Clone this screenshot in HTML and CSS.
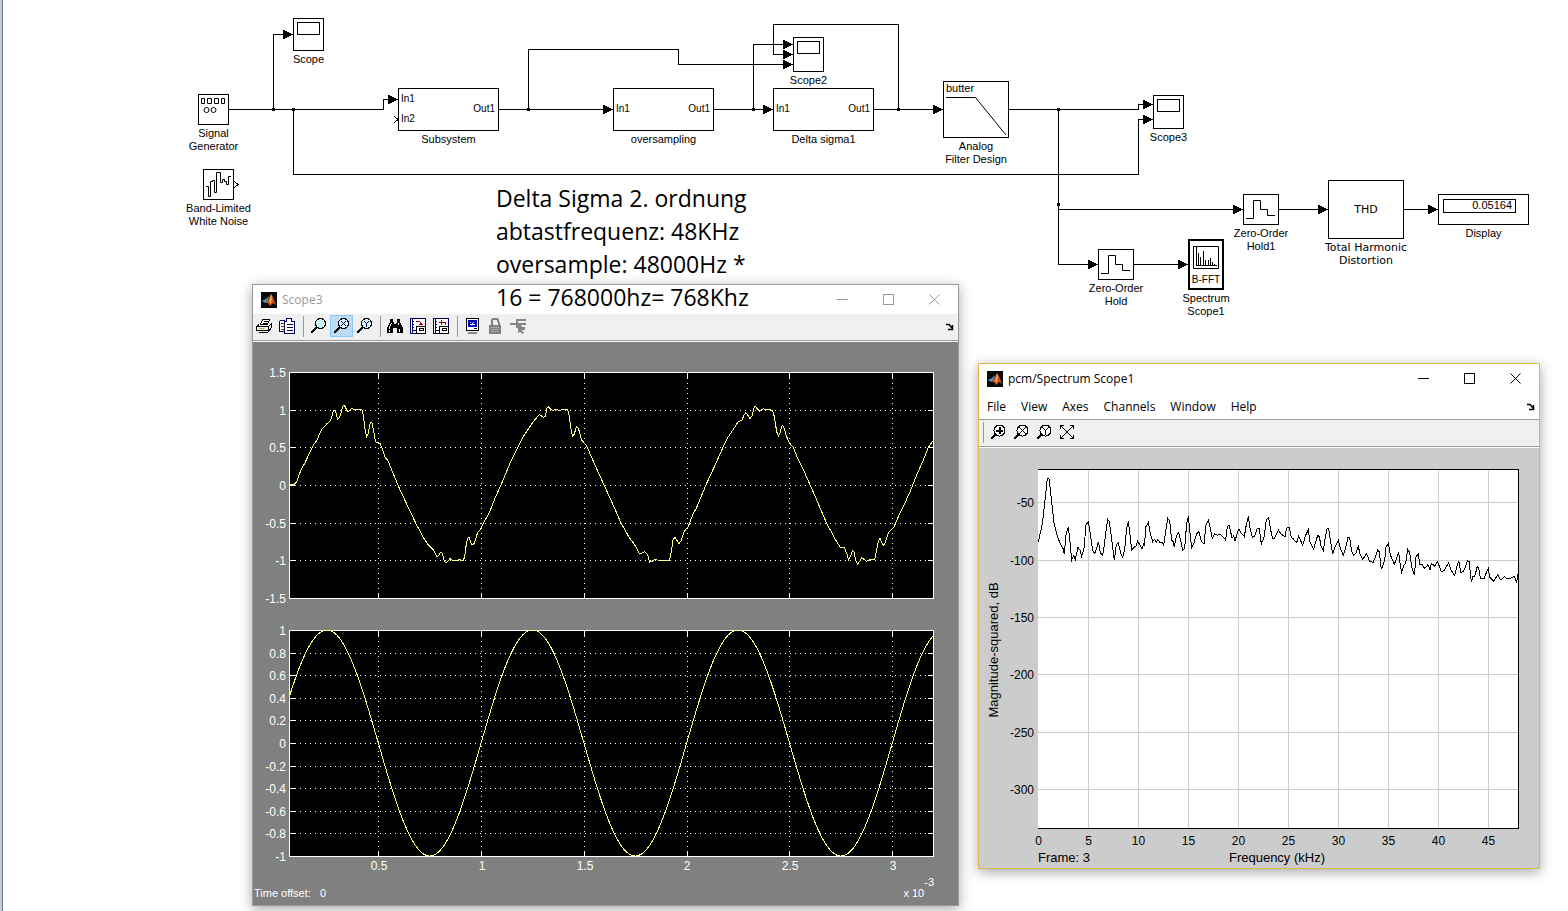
FILE: index.html
```html
<!DOCTYPE html>
<html lang="de">
  <head>
    <meta charset="utf-8" />
    <title>pcm</title>

    <link rel="stylesheet" href="styles.css">
  </head>

  <body>
    <svg class="defs" aria-hidden="true">
      <symbol id="logo" viewBox="0 0 16 16">
        <rect width="16" height="16" fill="#0a0a0c"/>
        <path d="M1 9L5 7L8 4L7 8L4 11Z" fill="#4a9cc4"/>
        <path d="M4 11L7 8L10 2L12 5L15 13L12 11L9 14L7 11Z" fill="#c8501c"/>
        <path d="M10 2L11 6L10 12L8 10Z" fill="#f4a63c"/>
      </symbol>
      <symbol id="dock" viewBox="0 0 8 8">
        <path d="M0 1.500H3L6 5M6.500 2V6.500H2" fill="none" stroke="#000" stroke-width="1.500"/>
      </symbol>
      <symbol id="minimize" viewBox="0 0 11 11"><path d="M0 5.500H11" stroke="currentColor"/></symbol>
      <symbol id="maximize" viewBox="0 0 11 11"><rect x="0.500" y="0.500" width="10" height="10" fill="none" stroke="currentColor"/></symbol>
      <symbol id="close" viewBox="0 0 11 11"><path d="M0.500 0.500L10.500 10.500M10.500 0.500L0.500 10.500" stroke="currentColor"/></symbol>
    </svg>

    <main class="model">
      <!-- signal lines -->
      <svg class="wires" aria-hidden="true">
        <defs>
          <marker id="arrow" markerWidth="10" markerHeight="10" refX="10" refY="5" markerUnits="userSpaceOnUse">
            <path d="M0 0L10 5L0 10Z"/>
          </marker>
        </defs>
        <g class="lines">
          <path d="M229 109.500H383.500V99.500H398"/>
          <path d="M273.500 109.500V34.500H293"/>
          <path d="M293.500 109.500V174.500H1138.500V119.500H1153"/>
          <path d="M499 109.500H613"/>
          <path d="M528.500 109.500V49.500H678.500V64.500H793"/>
          <path d="M714 109.500H773"/>
          <path d="M753.500 109.500V44.500H793"/>
          <path d="M874 109.500H943"/>
          <path d="M898.500 109.500V24.500H773.500V54.500H793"/>
          <path d="M1009 109.500H1138.500V104.500H1153"/>
          <path d="M1058.500 109.500V264.500H1098"/>
          <path d="M1058.500 209.500H1243"/>
          <path d="M1134 264.500H1188"/>
          <path d="M1279 209.500H1328"/>
          <path d="M1404 209.500H1438"/>
        </g>
        <path d="M272 108h3v3h-3zM292 108h3v3h-3zM527 108h3v3h-3zM752 108h3v3h-3zM897 108h3v3h-3zM1057 108h3v3h-3zM1057 203h3v3h-3z"/>
        <path class="port" d="M394 116L398 119.500L394 123M234 181L238 184.500L234 188"/>
      </svg>

      <!-- blocks -->
      <div class="block generator">
        <div class="box">
          <svg width="29" height="29" viewBox="0 0 29 29">
            <path d="M2.500 3.500h3v5h-3zM8.500 3.500h4v5h-4zM15.500 3.500h4v5h-4zM22.500 3.500h3v5h-3z"/>
            <circle cx="7.500" cy="15" r="2.500"/><circle cx="14.500" cy="15" r="2.500"/>
          </svg>
        </div>
        <span>Signal<br>Generator</span>
      </div>
      <div class="block scope">
        <div class="box"><i class="screen"></i></div>
        <span>Scope</span>
      </div>
      <div class="block noise">
        <div class="box">
          <svg width="29" height="29" viewBox="0 0 29 29">
            <path d="M2 16.500H4.500V26.500H6.500V11.500H8.500V10.500H10.500V22.500H12.500V2.500H16.500V12.500H18.500V9.500H20.500V11.500H22.500V14.500H24.500V6.500H27"/>
          </svg>
        </div>
        <span>Band-Limited<br>White Noise</span>
      </div>
      <div class="block subsystem">
        <div class="box ports"><b>In1<br><br>In2</b><b>Out1</b></div>
        <span>Subsystem</span>
      </div>
      <div class="block oversampling">
        <div class="box ports"><b>In1</b><b>Out1</b></div>
        <span>oversampling</span>
      </div>
      <div class="block delta">
        <div class="box ports"><b>In1</b><b>Out1</b></div>
        <span>Delta sigma1</span>
      </div>
      <div class="block scope2">
        <div class="box"><i class="screen"></i></div>
        <span>Scope2</span>
      </div>
      <div class="block filter">
        <div class="box">
          <em>butter</em>
          <svg width="64" height="40" viewBox="0 0 64 40"><path d="M2 0.500H31.500L62 38"/></svg>
        </div>
        <span>Analog<br>Filter Design</span>
      </div>
      <div class="block scope3">
        <div class="box"><i class="screen"></i></div>
        <span>Scope3</span>
      </div>
      <div class="block hold">
        <div class="box">
          <svg width="34" height="29" viewBox="0 0 34 29"><path d="M2 23.500H9.500V5.500H16.500V14.500H23.500V20.500H31"/></svg>
        </div>
        <span>Zero-Order<br>Hold</span>
      </div>
      <div class="block hold1">
        <div class="box">
          <svg width="34" height="29" viewBox="0 0 34 29"><path d="M2 23.500H9.500V5.500H16.500V14.500H23.500V20.500H31"/></svg>
        </div>
        <span>Zero-Order<br>Hold1</span>
      </div>
      <div class="block spectrum">
        <div class="box">
          <svg width="32" height="30" viewBox="0 0 32 30">
            <path d="M3.500 5.500h25v22h-25zM6.500 25V6M8.500 25V12M10.500 25V16M13.500 25V10M15.500 25V19M18.500 25V19M20.500 25V17M22.500 25V21M24.500 25V23M6 24.500H27"/>
          </svg>
          <em>B-FFT</em>
        </div>
        <span>Spectrum<br>Scope1</span>
      </div>
      <div class="block thd">
        <div class="box"><em>THD</em></div>
        <span>Total Harmonic<br>Distortion</span>
      </div>
      <div class="block display">
        <div class="box"><output>0.05164</output></div>
        <span>Display</span>
      </div>

      <p class="note">Delta Sigma 2. ordnung<br>abtastfrequenz: 48KHz<br>oversample: 48000Hz *<br>16 = 768000hz= 768Khz</p>

      <!-- Scope3 window -->
      <section class="window scope-window">
        <header class="titlebar">
          <svg class="logo"><use href="#logo"/></svg>
          <h2>Scope3</h2>
          <button type="button" aria-label="Minimize"><svg><use href="#minimize"/></svg></button>
          <button type="button" aria-label="Maximize"><svg><use href="#maximize"/></svg></button>
          <button type="button" aria-label="Close"><svg><use href="#close"/></svg></button>
        </header>
        <div class="toolbar">
          <button type="button" aria-label="Print">
            <svg viewBox="0 0 16 16"><path d="M1 8L4 6H14L12 9Z" fill="#fff"/><path d="M4.500 6.500L6.500 1.500H13.500L11.500 6.500Z" fill="#fff" stroke="#000"/><path d="M0.500 8.500L3 6.500M0.500 8.500H12.500L15.500 5.500V9.500L12.500 12.500H0.500ZM12.500 8.500V12.500M8 3.500H12M7 5.500H11M2.500 14.500H11.500L14.500 11.500" fill="none" stroke="#000"/><path d="M3 10.500H8" stroke="#c8b000"/></svg>
          </button>
          <button type="button" aria-label="Parameters">
            <svg viewBox="0 0 16 16"><path d="M0.500 2.500H5.500V15M0.500 2.500V13.500H6M5.500 3.500H7.500V0.500H12.500V3.500H15.500V15.500H5.500Z" fill="#fff" stroke="#000060"/><path d="M8 6.500H14M8 9.500H14M8 12.500H14" stroke="#000060"/><path d="M2 5.500H5M2 8.500H5M2 11.500H5" stroke="#a02020"/></svg>
          </button>
          <hr>
          <button type="button" aria-label="Zoom">
            <svg viewBox="0 0 16 16"><circle cx="10.500" cy="5.500" r="5" fill="#c8f4f4" stroke="#000"/><path d="M7 9L1 15" stroke="#000" stroke-width="2"/></svg>
          </button>
          <button type="button" class="active" aria-label="Zoom X-axis">
            <svg viewBox="0 0 16 16"><circle cx="10.500" cy="5.500" r="5" fill="#d8f0fa" stroke="#000"/><path d="M8 3L13 8M13 3L8 8" stroke="#000060"/><path d="M7 9L1 15" stroke="#000" stroke-width="2"/></svg>
          </button>
          <button type="button" aria-label="Zoom Y-axis">
            <svg viewBox="0 0 16 16"><circle cx="10.500" cy="5.500" r="5" fill="#d8f8f8" stroke="#000"/><path d="M8 3L10.500 5.500L13 3M10.500 5.500V9" fill="none" stroke="#000060"/><path d="M7 9L1 15" stroke="#000" stroke-width="2"/></svg>
          </button>
          <hr>
          <button type="button" aria-label="Autoscale">
            <svg viewBox="0 0 16 16"><path d="M3 1H6V4L7 5V6H9V5L10 4V1H13V4L16 10V15H10V10H6V15H0V10L3 4Z"/><path d="M4.500 5L2 10.500M11.500 5V7M2 12V14M12 11V14" stroke="#fff"/></svg>
          </button>
          <button type="button" aria-label="Save axes settings">
            <svg viewBox="0 0 16 16"><path d="M0.500 0.500H15.500V15.500H0.500Z" fill="#fff" stroke="#000060"/><path d="M2.500 1V15M2 3.500H4M2 6.500H4M2 9.500H4M2 12.500H15" stroke="#000060"/><path d="M6 3.500H9.500L11.500 6M9 6.500H13" fill="none" stroke="#a00000"/><path d="M6.500 8.500H15.500V15.500H6.500Z" fill="#fff" stroke="#000"/><path d="M9 10.500H13V12.500H9Z" fill="#fff" stroke="#000"/></svg>
          </button>
          <button type="button" aria-label="Restore axes settings">
            <svg viewBox="0 0 16 16"><path d="M0.500 0.500H15.500V15.500H0.500Z" fill="#fff" stroke="#000060"/><path d="M2.500 1V15M2 3.500H4M2 6.500H4M2 9.500H4M2 12.500H15" stroke="#000060"/><path d="M12.500 7V4.500H6M8.500 2V7" fill="none" stroke="#a00000"/><path d="M6.500 8.500H15.500V15.500H6.500Z" fill="#fff" stroke="#000"/><path d="M9 10.500H13V12.500H9Z" fill="#fff" stroke="#000"/></svg>
          </button>
          <hr>
          <button type="button" aria-label="Floating scope">
            <svg viewBox="0 0 16 16"><path d="M2.500 0.500H14.500V12.500H2.500Z" fill="#fff" stroke="#000"/><path d="M5 3H12V8H5Z" fill="#fff" stroke="#0000c0" stroke-width="2"/><path d="M6.500 6L8.500 4L10 6L11 4" fill="none" stroke="#0000c0"/><path d="M4 14.500H13" stroke="#888" stroke-width="2"/><path d="M10 10.500H13" stroke="#000"/></svg>
          </button>
          <button type="button" aria-label="Lock axes">
            <svg viewBox="0 0 16 16"><path d="M4.500 8V4A3.500 3.500 0 0 1 11.500 4V8" fill="none" stroke="#808080" stroke-width="2"/><path d="M2 7H14V16H2Z" fill="#808080"/><path d="M4 9.500H12M4 11.500H12M4 13.500H12" stroke="#a8a8a8"/></svg>
          </button>
          <button type="button" aria-label="Signal selection">
            <svg viewBox="0 0 16 16"><path d="M0 6H7M6 2H16M6 6H16M8 9.500H15M7 1V10" fill="none" stroke="#858585" stroke-width="2"/><path d="M8 5L15 12L12 12L14 15L12 16L10 13L8 15Z" fill="#858585"/></svg>
          </button>
          <svg class="dock"><use href="#dock"/></svg>
        </div>
        <svg class="plot" id="scopePlot" viewBox="253 342 705 538" role="img" aria-label="Scope3 signals">
          <g class="axes"></g>
          <!-- filtered delta sigma output, in thirds of a pixel -->
          <g transform="translate(250 360) scale(0.333333)">
            <polyline class="trace" points="120,374 132,374 140,366 152,332 165,308 190,255 200,242 215,208 232,190 242,182 250,152 256,152 263,178 269,172 279,137 284,137 291,152 295,155 305,146 318,150 325,148 336,150 340,166 346,215 350,230 354,222 361,188 366,188 371,215 377,246 390,250 398,270 405,292 413,300 445,378 470,432 500,495 520,532 535,555 550,570 561,590 567,586 571,577 577,580 583,605 588,609 594,604 600,596 610,603 620,602 628,599 640,601 644,590 650,545 654,534 658,533 663,548 667,555 673,550 683,517 692,508 700,490 718,458 735,415 755,370 780,310 803,262 820,230 850,185 868,163 874,168 880,172 886,170 891,145 895,140 902,148 907,151 918,149 928,151 940,149 953,149 958,170 964,215 968,229 973,222 979,200 985,204 995,240 1010,258 1035,315 1060,370 1090,436 1112,487 1135,528 1155,556 1168,580 1177,579 1185,575 1193,585 1199,606 1205,605 1215,598 1222,600 1259,601 1263,580 1269,540 1275,532 1280,540 1287,552 1293,542 1303,514 1315,499 1330,460 1338,447 1370,370 1400,305 1423,253 1432,235 1450,208 1465,184 1475,182 1482,166 1487,158 1493,165 1500,176 1506,168 1513,140 1517,140 1523,148 1529,154 1540,146 1550,150 1560,148 1568,152 1573,170 1580,215 1585,228 1589,222 1596,197 1601,199 1608,225 1616,245 1630,263 1645,300 1665,340 1695,408 1730,490 1760,545 1772,563 1784,564 1790,580 1796,599 1801,590 1807,572 1812,575 1817,600 1823,612 1829,604 1835,594 1842,598 1850,604 1863,598 1874,600 1878,580 1885,543 1890,535 1895,548 1900,556 1906,548 1915,518 1932,501 1945,470 1960,440 1980,395 2000,345 2020,300 2035,262 2051,240"/>
          </g>
          <polyline class="trace" id="sine"/>
        </svg>
        <footer class="status">
          <span>Time offset:&nbsp;&nbsp; 0</span>
          <span>x 10<sup>-3</sup></span>
        </footer>
      </section>

      <!-- Spectrum Scope1 window -->
      <section class="window spectrum-window">
        <header class="titlebar">
          <svg class="logo"><use href="#logo"/></svg>
          <h2>pcm/Spectrum Scope1</h2>
          <button type="button" aria-label="Minimize"><svg><use href="#minimize"/></svg></button>
          <button type="button" aria-label="Maximize"><svg><use href="#maximize"/></svg></button>
          <button type="button" aria-label="Close"><svg><use href="#close"/></svg></button>
        </header>
        <nav class="menu">
          <button type="button">File</button>
          <button type="button">View</button>
          <button type="button">Axes</button>
          <button type="button">Channels</button>
          <button type="button">Window</button>
          <button type="button">Help</button>
          <svg class="dock"><use href="#dock"/></svg>
        </nav>
        <div class="toolbar">
          <hr>
          <button type="button" aria-label="Zoom in">
            <svg viewBox="0 0 16 16"><circle cx="9.500" cy="6.500" r="5.500" fill="#fff" stroke="#000"/><path d="M6 6.500H13M9.500 3V10" stroke="#000" stroke-width="2"/><path d="M6 10L1 15" stroke="#000" stroke-width="2"/></svg>
          </button>
          <button type="button" aria-label="Zoom X">
            <svg viewBox="0 0 16 16"><circle cx="9.500" cy="6.500" r="5.500" fill="#fff" stroke="#000"/><path d="M6 3L13 10M13 3L6 10" stroke="#000"/><path d="M6 10L1 15" stroke="#000" stroke-width="2"/></svg>
          </button>
          <button type="button" aria-label="Zoom Y">
            <svg viewBox="0 0 16 16"><circle cx="9.500" cy="6.500" r="5.500" fill="#fff" stroke="#000"/><path d="M6.500 3.500L9.500 6.500L12.500 3.500M9.500 6.500V11" fill="none" stroke="#000"/><path d="M6 10L1 15" stroke="#000" stroke-width="2"/></svg>
          </button>
          <button type="button" aria-label="Full view">
            <svg viewBox="0 0 16 16"><path d="M2 2L14 14M14 2L2 14M1.500 5V1.500H5M11 1.500H14.500V5M14.500 11V14.500H11M5 14.500H1.500V11" fill="none" stroke="#000"/></svg>
          </button>
        </div>
        <svg class="plot" id="spectrumPlot" viewBox="979 448 560 420" role="img" aria-label="Magnitude spectrum">
          <rect x="1038" y="469" width="481" height="360" fill="#fff"/>
          <g class="axes"></g>
          <path class="frame" d="M1038 469.500H1518.500V828.500H1038"/>
          <g transform="translate(1030 460) scale(0.333333)">
            <polyline class="trace" points="25,247 38,185 45,120 52,55 57,57 64,115 72,190 82,230 95,260 99,265 103,282 108,225 115,200 119,235 125,300 131,287 136,298 144,262 150,270 155,290 162,265 168,195 175,185 182,230 188,272 194,280 200,265 205,245 211,278 217,286 221,270 227,220 233,178 238,185 244,230 253,300 259,254 265,248 272,280 278,292 284,270 290,205 295,184 300,225 305,270 312,262 318,258 323,244 330,255 336,266 341,252 343,258 348,200 355,187 361,220 368,245 373,238 379,246 384,239 390,248 395,246 401,256 407,215 413,175 419,182 425,240 430,245 433,262 439,228 446,218 452,240 458,270 464,266 470,190 475,169 480,220 485,262 492,248 500,222 507,215 514,245 522,252 528,195 535,181 541,205 547,236 554,222 562,226 567,222 577,228 587,240 592,200 598,196 606,235 611,228 615,244 620,225 627,206 634,220 643,230 648,200 655,169 660,205 667,232 674,228 682,205 688,205 694,252 702,232 709,178 716,173 722,210 728,236 734,234 745,210 753,222 765,230 770,204 778,202 784,232 790,237 800,248 806,228 818,256 826,228 835,209 840,245 851,267 863,226 868,230 873,258 880,272 886,230 892,204 896,206 901,240 908,282 916,258 925,240 930,262 940,286 946,268 954,232 959,234 965,275 971,286 978,280 985,260 991,285 998,298 1010,281 1018,303 1030,307 1036,290 1043,271 1048,276 1054,328 1064,300 1068,262 1075,250 1081,285 1093,313 1100,295 1106,275 1110,310 1115,336 1122,315 1127,310 1133,268 1139,277 1145,320 1153,346 1158,290 1165,283 1170,315 1176,313 1184,326 1194,314 1200,330 1204,310 1214,318 1223,305 1234,336 1242,332 1256,308 1263,330 1274,346 1280,322 1286,302 1293,338 1300,334 1307,320 1312,302 1317,304 1324,366 1329,348 1334,350 1342,319 1346,322 1351,355 1363,355 1370,335 1375,326 1379,352 1391,364 1403,344 1410,358 1417,357 1423,350 1432,357 1442,355 1453,349 1460,368 1463,342 1466,352"/>
          </g>
          <text x="1038" y="862">Frame: 3</text>
          <text x="1277" y="862" text-anchor="middle">Frequency (kHz)</text>
          <text transform="translate(998 650) rotate(-90)" text-anchor="middle">Magnitude-squared, dB</text>
        </svg>
      </section>
    </main>

    <script src="plots.js"></script>
  </body>
</html>
```
FILE: styles.css
```css
* {
  box-sizing: border-box;
}

body {
  margin: 0;
  background: #fff;
  color: #000;
  font-family: "Liberation Sans", Arial, sans-serif;
}

.defs {
  display: none;
}

.model {
  position: relative;
  min-height: 100vh;
  overflow: hidden;
  background: linear-gradient(to right, #c3ccd6 2px, #6f767e 2px, #6f767e 3px, #fff 3px);
}

.wires {
  position: absolute;
  left: 0;
  top: 0;
  width: 100%;
  height: 100%;
  shape-rendering: crispEdges;
}

.wires .lines path {
  fill: none;
  stroke: #000;
  marker-end: url(#arrow);
}

.wires .port {
  fill: none;
  stroke: #000;
}

/* blocks */
.block {
  position: absolute;
  display: flex;
  flex-direction: column;
  align-items: center;
}

.block span {
  margin-top: 2px;
  font-size: 11px;
  line-height: 13px;
  text-align: center;
  white-space: nowrap;
}

.box {
  width: 100%;
  border: 1px solid #000;
  background: #fff;
  overflow: hidden;
}

.box svg {
  display: block;
  fill: none;
  stroke: #000;
}

.box em {
  display: block;
  font-style: normal;
  font-size: 11px;
  line-height: 13px;
}

.ports {
  display: flex;
  align-items: center;
  justify-content: space-between;
  padding: 0 3px 1px 2px;
  font-size: 10px;
  line-height: 10px;
}

.ports b {
  font-weight: normal;
}

.screen {
  display: block;
  width: 23px;
  height: 13px;
  margin: 3px;
  border: 1px solid #000;
}

.generator { left: 198px; top: 94px; width: 31px; }
.noise { left: 203px; top: 169px; width: 31px; }
.scope { left: 293px; top: 18px; width: 31px; }
.scope2 { left: 793px; top: 37px; width: 31px; }
.scope3 { left: 1153px; top: 95px; width: 31px; }
.subsystem { left: 398px; top: 88px; width: 101px; }
.oversampling { left: 613px; top: 88px; width: 101px; }
.delta { left: 773px; top: 88px; width: 101px; }
.filter { left: 943px; top: 81px; width: 66px; }
.hold { left: 1098px; top: 249px; width: 36px; }
.hold1 { left: 1243px; top: 194px; width: 36px; }
.spectrum { left: 1188px; top: 239px; width: 36px; }
.thd { left: 1328px; top: 180px; width: 76px; }
.display { left: 1438px; top: 194px; width: 91px; }

.scope .box { height: 33px; }
.scope2 .box { height: 35px; }
.scope3 .box { height: 34px; }
.ports { height: 43px; }

.filter .box {
  height: 57px;
}

.filter em {
  padding-left: 2px;
  margin-bottom: 2px;
}

.spectrum .box {
  height: 51px;
  border-width: 2px;
  text-align: center;
}

.spectrum em {
  margin-top: 2px;
  font-size: 10px;
}

.thd .box {
  display: flex;
  align-items: center;
  justify-content: center;
  height: 59px;
}

.thd em,
.thd span {
  font-family: "DejaVu Sans", Verdana, sans-serif;
}

.display .box {
  height: 31px;
  padding: 4px;
}

.display output {
  display: block;
  width: 73px;
  height: 14px;
  padding-right: 3px;
  border: 1px solid #000;
  font-size: 11px;
  line-height: 11px;
  text-align: right;
}

.note {
  position: absolute;
  left: 496px;
  top: 182px;
  z-index: 2;
  margin: 0;
  font-family: "Open Sans", Calibri, sans-serif;
  font-size: 23px;
  line-height: 33px;
}

/* windows */
.window {
  position: absolute;
  display: flex;
  flex-direction: column;
  border: 1px solid #999;
  box-shadow: 0 3px 12px rgba(0, 0, 0, 0.35);
  background: #fff;
}

.scope-window {
  left: 252px;
  top: 284px;
  width: 707px;
}

.spectrum-window {
  left: 978px;
  top: 363px;
  width: 562px;
  border-color: #e3b64a;
}

.titlebar {
  display: flex;
  align-items: center;
  height: 29px;
  padding-left: 8px;
}

.titlebar h2 {
  flex: 1;
  margin: 0 0 0 5px;
  font-family: "Open Sans", "Segoe UI", sans-serif;
  font-size: 12px;
  font-weight: normal;
}

.logo {
  width: 16px;
  height: 16px;
}

button {
  display: flex;
  align-items: center;
  justify-content: center;
  padding: 0;
  border: none;
  background: none;
  color: #000;
}

.titlebar button {
  width: 46px;
  height: 29px;
  padding-right: 1px;
}

.titlebar button svg {
  width: 11px;
  height: 11px;
}

.scope-window .titlebar h2,
.scope-window .titlebar button {
  color: #999;
}

.toolbar {
  display: flex;
  align-items: center;
  height: 27px;
  padding-bottom: 2px;
  border-bottom: 1px solid #999;
  background: #f0f0f0;
}

.toolbar button {
  width: 23px;
  height: 22px;
  padding-right: 1px;
}

.toolbar button svg {
  width: 16px;
  height: 16px;
  shape-rendering: crispEdges;
}

.toolbar .active {
  background: #bcdcf4;
  border: 1px solid #90c8f6;
}

.toolbar hr {
  width: 1px;
  height: 21px;
  margin: 0 3px 0 4px;
  border: none;
  background: #999;
}

.dock {
  width: 8px;
  height: 8px;
  margin: 2px 4px 0 auto;
}

.menu {
  display: flex;
  align-items: center;
  gap: 15px;
  height: 27px;
  padding-left: 8px;
  border-bottom: 1px solid #999;
}

.menu button {
  font-family: "Open Sans", "Segoe UI", sans-serif;
  font-size: 12px;
}

/* plots */
.plot {
  display: block;
  width: 100%;
  border-top: 1px solid #fff;
}

.plot line,
.plot path,
.plot polyline {
  shape-rendering: crispEdges;
}

.plot .trace {
  fill: none;
  vector-effect: non-scaling-stroke;
}

#scopePlot {
  background: #808080;
  font-size: 12px;
  fill: #fff;
}

#scopePlot .trace {
  stroke: #ffff80;
}

#scopePlot .grid {
  stroke: #fff;
  stroke-dasharray: 1 4;
}

#scopePlot .tick,
#scopePlot .frame {
  stroke: #fff;
}

#scopePlot .frame {
  fill: #000;
}

#spectrumPlot {
  background: #ccc;
  font-size: 13px;
}

#spectrumPlot .trace,
#spectrumPlot .frame {
  fill: none;
  stroke: #000;
}

#spectrumPlot .grid {
  stroke: #ccc;
}

#spectrumPlot .tick-label {
  font-size: 12px;
}

.status {
  display: flex;
  justify-content: space-between;
  height: 25px;
  padding: 5px 24px 0 1px;
  background: #808080;
  color: #fff;
  font-size: 11px;
  line-height: 16px;
}

.status sup {
  position: relative;
  top: -11px;
  font-size: 11px;
  line-height: 0;
  vertical-align: baseline;
}
```
FILE: plots.js
```js
const SVG_NS = "http://www.w3.org/2000/svg";

function add(parent, name, attrs, text) {
  const el = document.createElementNS(SVG_NS, name);
  for (const key in attrs) {
    el.setAttribute(key, attrs[key]);
  }
  if (text !== undefined) {
    el.textContent = text;
  }
  parent.appendChild(el);
}

function addLine(parent, cls, x1, y1, x2, y2) {
  add(parent, "line", { class: cls, x1: x1, y1: y1, x2: x2, y2: y2 });
}

function addLabel(parent, x, y, anchor, text) {
  add(parent, "text", { class: "tick-label", x: x, y: y, "text-anchor": anchor }, text);
}

// One black axes box of the scope, with dotted grid and tick marks
function scopeAxes(top, labels) {
  const g = document.querySelector("#scopePlot .axes");
  const left = 289.5, right = 933.5, height = 226;
  add(g, "rect", { class: "frame", x: left, y: top, width: right - left, height: height });

  [378.5, 481.5, 584.5, 687.5, 789.5, 892.5].forEach(x => {
    addLine(g, "grid", x, top, x, top + height);
    addLine(g, "tick", x, top, x, top + 6);
    addLine(g, "tick", x, top + height - 6, x, top + height);
  });

  labels.forEach((label, i) => {
    const y = Math.floor(top + height * i / (labels.length - 1)) + 0.5;
    addLine(g, "grid", left, y, right, y);
    addLine(g, "tick", left, y, left + 6, y);
    addLine(g, "tick", right - 6, y, right, y);
    addLabel(g, 286, y + 4, "end", label);
  });
}

scopeAxes(372.5, ["1.5", "1", "0.5", "0", "-0.5", "-1", "-1.5"]);
scopeAxes(630.5, ["1", "0.8", "0.6", "0.4", "0.2", "0", "-0.2", "-0.4", "-0.6", "-0.8", "-1"]);

const scope = document.querySelector("#scopePlot .axes");
["0.5", "1", "1.5", "2", "2.5", "3"].forEach((label, i) => {
  addLabel(scope, 379 + Math.round(i * 102.8), 870, "middle", label);
});

// 1 kHz reference sine
const sine = [];
for (let x = 289; x <= 933; x++) {
  sine.push(x + "," + (743 - 113 * Math.sin(2 * Math.PI * (x - 275.5) / 205.6)).toFixed(1));
}
document.getElementById("sine").setAttribute("points", sine.join(" "));

// Spectrum grid
const spectrum = document.querySelector("#spectrumPlot .axes");
for (let k = 0; k <= 45; k += 5) {
  const x = 1038.5 + k * 10;
  if (k > 0) {
    addLine(spectrum, "grid", x, 470, x, 828);
  }
  addLabel(spectrum, x, 845, "middle", k);
}
for (let db = 50; db <= 300; db += 50) {
  const y = Math.round(445 + db * 1.147) + 0.5;
  addLine(spectrum, "grid", 1038, y, 1518, y);
  addLabel(spectrum, 1034, y + 4, "end", -db);
}
```
